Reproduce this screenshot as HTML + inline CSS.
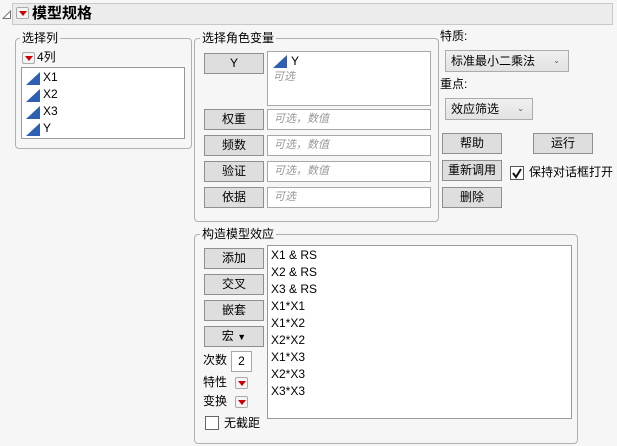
<!DOCTYPE html>
<html><head><meta charset="utf-8"><style>
*{box-sizing:border-box;margin:0;padding:0}
body{width:617px;height:446px;background:#f6f6f6;position:relative;overflow:hidden;font-family:"Liberation Sans","Microsoft YaHei","Noto Sans CJK SC",sans-serif;font-size:12px;color:#000}
.a{position:absolute}
.grp{position:absolute;border:1px solid #b0b0b0;border-radius:4px}
.leg{position:absolute;background:#f6f6f6;padding:0 2px;font-size:12px;line-height:14px}
.btn{position:absolute;background:#dedede;border:1px solid #8f8f8f;text-align:center;font-size:12px;line-height:18px;width:60px;height:21px}
.box{position:absolute;background:#fff;border:1px solid #a8a8a8}
.ph{color:#999;font-style:italic;font-size:11px;padding-left:6px;line-height:19px}
.rb{position:absolute;width:13px;height:12px;border:1px solid #aaa;border-radius:2px;background:#f4f4f4}
.rb:after{content:"";position:absolute;left:2px;top:3px;border-left:4px solid transparent;border-right:4px solid transparent;border-top:5px solid #c00}
.tri{position:absolute;width:0;height:0;border-left:14px solid transparent;border-bottom:13px solid #2f5fb0}
.it{position:absolute;line-height:17px;font-size:12px}
.dd{position:absolute;background:linear-gradient(#f0f0f0,#e2e2e2);border:1px solid #acacac;line-height:20px;padding-left:5px;font-size:12px}
.dd span{position:absolute;right:8px;top:0;font-size:8px;color:#555}
.cb{position:absolute;width:14px;height:14px;background:#fff;border:1px solid #555}
</style></head><body>
<div class="a" style="left:3px;top:11px;width:0;height:0;border-left:8px solid transparent;border-bottom:8px solid #fff"></div>
<svg class="a" style="left:2px;top:10px" width="10" height="10"><path d="M1 8.5 L8.5 1 L8.5 8.5 Z" fill="none" stroke="#777"/></svg>
<div class="a" style="left:12px;top:3px;width:601px;height:22px;background:#ececec;border:1px solid #c8c8c8"></div>
<div class="rb" style="left:16px;top:7px"></div>
<div class="a" style="left:32px;top:4px;font-size:15px;font-weight:bold;line-height:20px">模型规格</div>

<div class="grp" style="left:15px;top:38px;width:177px;height:111px"></div>
<div class="leg" style="left:20px;top:31px">选择列</div>
<div class="rb" style="left:22px;top:52px"></div>
<div class="a" style="left:37px;top:50px;line-height:14px">4列</div>
<div class="box" style="left:21px;top:67px;width:164px;height:72px;border-color:#999"></div>
<div class="tri" style="left:26px;top:72px"></div><div class="it" style="left:43px;top:69px">X1</div>
<div class="tri" style="left:26px;top:89px"></div><div class="it" style="left:43px;top:86px">X2</div>
<div class="tri" style="left:26px;top:106px"></div><div class="it" style="left:43px;top:103px">X3</div>
<div class="tri" style="left:26px;top:123px"></div><div class="it" style="left:43px;top:120px">Y</div>

<div class="grp" style="left:194px;top:38px;width:245px;height:184px"></div>
<div class="leg" style="left:200px;top:31px">选择角色变量</div>
<div class="btn" style="left:204px;top:53px">Y</div>
<div class="box" style="left:267px;top:51px;width:164px;height:55px"></div>
<div class="tri" style="left:273px;top:55px"></div><div class="it" style="left:291px;top:53px">Y</div>
<div class="a ph" style="left:267px;top:69px;line-height:17px">可选</div>
<div class="btn" style="left:204px;top:109px">权重</div><div class="box ph" style="left:267px;top:109px;width:164px;height:21px">可选，数值</div>
<div class="btn" style="left:204px;top:135px">频数</div><div class="box ph" style="left:267px;top:135px;width:164px;height:21px">可选，数值</div>
<div class="btn" style="left:204px;top:161px">验证</div><div class="box ph" style="left:267px;top:161px;width:164px;height:21px">可选，数值</div>
<div class="btn" style="left:204px;top:187px">依据</div><div class="box ph" style="left:267px;top:187px;width:164px;height:21px">可选</div>

<div class="a" style="left:440px;top:28px;line-height:16px">特质:</div>
<div class="dd" style="left:445px;top:50px;width:124px;height:22px">标准最小二乘法<span>⌄</span></div>
<div class="a" style="left:440px;top:76px;line-height:16px">重点:</div>
<div class="dd" style="left:445px;top:98px;width:88px;height:22px">效应筛选<span>⌄</span></div>
<div class="btn" style="left:442px;top:133px">帮助</div>
<div class="btn" style="left:533px;top:133px">运行</div>
<div class="btn" style="left:442px;top:160px">重新调用</div>
<div class="cb" style="left:510px;top:166px"></div>
<svg class="a" style="left:510px;top:166px" width="14" height="14"><path d="M3 7 L6 11 L11 3" fill="none" stroke="#111" stroke-width="2"/></svg>
<div class="a" style="left:529px;top:164px;line-height:16px">保持对话框打开</div>
<div class="btn" style="left:442px;top:187px">删除</div>

<div class="grp" style="left:194px;top:234px;width:384px;height:210px"></div>
<div class="leg" style="left:200px;top:227px">构造模型效应</div>
<div class="btn" style="left:204px;top:248px">添加</div>
<div class="btn" style="left:204px;top:274px">交叉</div>
<div class="btn" style="left:204px;top:300px">嵌套</div>
<div class="btn" style="left:204px;top:326px">宏 <span style="font-size:9px">▼</span></div>
<div class="box" style="left:267px;top:245px;width:305px;height:174px;border-color:#999"></div>
<div class="it" style="left:271px;top:247px">X1 &amp; RS</div>
<div class="it" style="left:271px;top:264px">X2 &amp; RS</div>
<div class="it" style="left:271px;top:281px">X3 &amp; RS</div>
<div class="it" style="left:271px;top:298px">X1*X1</div>
<div class="it" style="left:271px;top:315px">X1*X2</div>
<div class="it" style="left:271px;top:332px">X2*X2</div>
<div class="it" style="left:271px;top:349px">X1*X3</div>
<div class="it" style="left:271px;top:366px">X2*X3</div>
<div class="it" style="left:271px;top:383px">X3*X3</div>
<div class="a" style="left:203px;top:352px;line-height:16px">次数</div>
<div class="box" style="left:231px;top:351px;width:21px;height:21px;text-align:center;line-height:18px">2</div>
<div class="a" style="left:203px;top:374px;line-height:16px">特性</div><div class="rb" style="left:235px;top:377px"></div>
<div class="a" style="left:203px;top:393px;line-height:16px">变换</div><div class="rb" style="left:235px;top:396px"></div>
<div class="cb" style="left:205px;top:416px;border-color:#666"></div>
<div class="a" style="left:224px;top:415px;line-height:16px">无截距</div>
</body></html>
